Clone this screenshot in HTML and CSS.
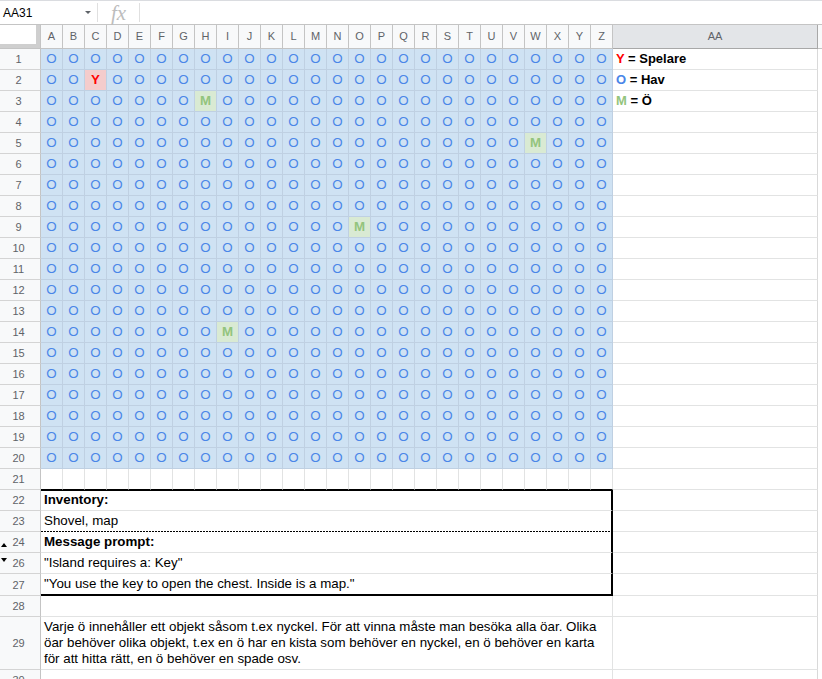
FILE: index.html
```html
<!DOCTYPE html>
<html lang="sv">
<head>
<meta charset="utf-8">
<title>Sheet</title>
<link rel="stylesheet" href="styles.css">
</head>
<body>
<div class="sheet">
  <div class="fbar">
    <div class="namebox"><span class="ref">AA31</span><svg class="caret" width="6" height="3" viewBox="0 0 6 3"><path d="M0 0H6L3 3Z"/></svg></div>
    <div class="sep"></div>
    <div class="fx">fx</div>
    <div class="sep"></div>
    <div class="finput"></div>
  </div>

  <div class="colhead">
    <div class="corner"></div>
    <div class="ch">A</div><div class="ch">B</div><div class="ch">C</div><div class="ch">D</div><div class="ch">E</div><div class="ch">F</div><div class="ch">G</div><div class="ch">H</div><div class="ch">I</div><div class="ch">J</div><div class="ch">K</div><div class="ch">L</div><div class="ch">M</div><div class="ch">N</div><div class="ch">O</div><div class="ch">P</div><div class="ch">Q</div><div class="ch">R</div><div class="ch">S</div><div class="ch">T</div><div class="ch">U</div><div class="ch">V</div><div class="ch">W</div><div class="ch">X</div><div class="ch">Y</div><div class="ch">Z</div>
    <div class="ch sel">AA</div>
    <div class="ch rest"></div>
  </div>

  <div class="row sea"><div class="rh">1</div><span>O</span><span>O</span><span>O</span><span>O</span><span>O</span><span>O</span><span>O</span><span>O</span><span>O</span><span>O</span><span>O</span><span>O</span><span>O</span><span>O</span><span>O</span><span>O</span><span>O</span><span>O</span><span>O</span><span>O</span><span>O</span><span>O</span><span>O</span><span>O</span><span>O</span><span>O</span><div class="aa lg"><span class="red">Y</span> = Spelare</div><div class="rest"></div></div>
  <div class="row sea"><div class="rh">2</div><span>O</span><span>O</span><span class="y">Y</span><span>O</span><span>O</span><span>O</span><span>O</span><span>O</span><span>O</span><span>O</span><span>O</span><span>O</span><span>O</span><span>O</span><span>O</span><span>O</span><span>O</span><span>O</span><span>O</span><span>O</span><span>O</span><span>O</span><span>O</span><span>O</span><span>O</span><span>O</span><div class="aa lg"><span class="blue">O</span> = Hav</div><div class="rest"></div></div>
  <div class="row sea"><div class="rh">3</div><span>O</span><span>O</span><span>O</span><span>O</span><span>O</span><span>O</span><span>O</span><span class="m">M</span><span>O</span><span>O</span><span>O</span><span>O</span><span>O</span><span>O</span><span>O</span><span>O</span><span>O</span><span>O</span><span>O</span><span>O</span><span>O</span><span>O</span><span>O</span><span>O</span><span>O</span><span>O</span><div class="aa lg"><span class="green">M</span> = Ö</div><div class="rest"></div></div>
  <div class="row sea"><div class="rh">4</div><span>O</span><span>O</span><span>O</span><span>O</span><span>O</span><span>O</span><span>O</span><span>O</span><span>O</span><span>O</span><span>O</span><span>O</span><span>O</span><span>O</span><span>O</span><span>O</span><span>O</span><span>O</span><span>O</span><span>O</span><span>O</span><span>O</span><span>O</span><span>O</span><span>O</span><span>O</span><div class="aa"></div><div class="rest"></div></div>
  <div class="row sea"><div class="rh">5</div><span>O</span><span>O</span><span>O</span><span>O</span><span>O</span><span>O</span><span>O</span><span>O</span><span>O</span><span>O</span><span>O</span><span>O</span><span>O</span><span>O</span><span>O</span><span>O</span><span>O</span><span>O</span><span>O</span><span>O</span><span>O</span><span>O</span><span class="m">M</span><span>O</span><span>O</span><span>O</span><div class="aa"></div><div class="rest"></div></div>
  <div class="row sea"><div class="rh">6</div><span>O</span><span>O</span><span>O</span><span>O</span><span>O</span><span>O</span><span>O</span><span>O</span><span>O</span><span>O</span><span>O</span><span>O</span><span>O</span><span>O</span><span>O</span><span>O</span><span>O</span><span>O</span><span>O</span><span>O</span><span>O</span><span>O</span><span>O</span><span>O</span><span>O</span><span>O</span><div class="aa"></div><div class="rest"></div></div>
  <div class="row sea"><div class="rh">7</div><span>O</span><span>O</span><span>O</span><span>O</span><span>O</span><span>O</span><span>O</span><span>O</span><span>O</span><span>O</span><span>O</span><span>O</span><span>O</span><span>O</span><span>O</span><span>O</span><span>O</span><span>O</span><span>O</span><span>O</span><span>O</span><span>O</span><span>O</span><span>O</span><span>O</span><span>O</span><div class="aa"></div><div class="rest"></div></div>
  <div class="row sea"><div class="rh">8</div><span>O</span><span>O</span><span>O</span><span>O</span><span>O</span><span>O</span><span>O</span><span>O</span><span>O</span><span>O</span><span>O</span><span>O</span><span>O</span><span>O</span><span>O</span><span>O</span><span>O</span><span>O</span><span>O</span><span>O</span><span>O</span><span>O</span><span>O</span><span>O</span><span>O</span><span>O</span><div class="aa"></div><div class="rest"></div></div>
  <div class="row sea"><div class="rh">9</div><span>O</span><span>O</span><span>O</span><span>O</span><span>O</span><span>O</span><span>O</span><span>O</span><span>O</span><span>O</span><span>O</span><span>O</span><span>O</span><span>O</span><span class="m">M</span><span>O</span><span>O</span><span>O</span><span>O</span><span>O</span><span>O</span><span>O</span><span>O</span><span>O</span><span>O</span><span>O</span><div class="aa"></div><div class="rest"></div></div>
  <div class="row sea"><div class="rh">10</div><span>O</span><span>O</span><span>O</span><span>O</span><span>O</span><span>O</span><span>O</span><span>O</span><span>O</span><span>O</span><span>O</span><span>O</span><span>O</span><span>O</span><span>O</span><span>O</span><span>O</span><span>O</span><span>O</span><span>O</span><span>O</span><span>O</span><span>O</span><span>O</span><span>O</span><span>O</span><div class="aa"></div><div class="rest"></div></div>
  <div class="row sea"><div class="rh">11</div><span>O</span><span>O</span><span>O</span><span>O</span><span>O</span><span>O</span><span>O</span><span>O</span><span>O</span><span>O</span><span>O</span><span>O</span><span>O</span><span>O</span><span>O</span><span>O</span><span>O</span><span>O</span><span>O</span><span>O</span><span>O</span><span>O</span><span>O</span><span>O</span><span>O</span><span>O</span><div class="aa"></div><div class="rest"></div></div>
  <div class="row sea"><div class="rh">12</div><span>O</span><span>O</span><span>O</span><span>O</span><span>O</span><span>O</span><span>O</span><span>O</span><span>O</span><span>O</span><span>O</span><span>O</span><span>O</span><span>O</span><span>O</span><span>O</span><span>O</span><span>O</span><span>O</span><span>O</span><span>O</span><span>O</span><span>O</span><span>O</span><span>O</span><span>O</span><div class="aa"></div><div class="rest"></div></div>
  <div class="row sea"><div class="rh">13</div><span>O</span><span>O</span><span>O</span><span>O</span><span>O</span><span>O</span><span>O</span><span>O</span><span>O</span><span>O</span><span>O</span><span>O</span><span>O</span><span>O</span><span>O</span><span>O</span><span>O</span><span>O</span><span>O</span><span>O</span><span>O</span><span>O</span><span>O</span><span>O</span><span>O</span><span>O</span><div class="aa"></div><div class="rest"></div></div>
  <div class="row sea"><div class="rh">14</div><span>O</span><span>O</span><span>O</span><span>O</span><span>O</span><span>O</span><span>O</span><span>O</span><span class="m">M</span><span>O</span><span>O</span><span>O</span><span>O</span><span>O</span><span>O</span><span>O</span><span>O</span><span>O</span><span>O</span><span>O</span><span>O</span><span>O</span><span>O</span><span>O</span><span>O</span><span>O</span><div class="aa"></div><div class="rest"></div></div>
  <div class="row sea"><div class="rh">15</div><span>O</span><span>O</span><span>O</span><span>O</span><span>O</span><span>O</span><span>O</span><span>O</span><span>O</span><span>O</span><span>O</span><span>O</span><span>O</span><span>O</span><span>O</span><span>O</span><span>O</span><span>O</span><span>O</span><span>O</span><span>O</span><span>O</span><span>O</span><span>O</span><span>O</span><span>O</span><div class="aa"></div><div class="rest"></div></div>
  <div class="row sea"><div class="rh">16</div><span>O</span><span>O</span><span>O</span><span>O</span><span>O</span><span>O</span><span>O</span><span>O</span><span>O</span><span>O</span><span>O</span><span>O</span><span>O</span><span>O</span><span>O</span><span>O</span><span>O</span><span>O</span><span>O</span><span>O</span><span>O</span><span>O</span><span>O</span><span>O</span><span>O</span><span>O</span><div class="aa"></div><div class="rest"></div></div>
  <div class="row sea"><div class="rh">17</div><span>O</span><span>O</span><span>O</span><span>O</span><span>O</span><span>O</span><span>O</span><span>O</span><span>O</span><span>O</span><span>O</span><span>O</span><span>O</span><span>O</span><span>O</span><span>O</span><span>O</span><span>O</span><span>O</span><span>O</span><span>O</span><span>O</span><span>O</span><span>O</span><span>O</span><span>O</span><div class="aa"></div><div class="rest"></div></div>
  <div class="row sea"><div class="rh">18</div><span>O</span><span>O</span><span>O</span><span>O</span><span>O</span><span>O</span><span>O</span><span>O</span><span>O</span><span>O</span><span>O</span><span>O</span><span>O</span><span>O</span><span>O</span><span>O</span><span>O</span><span>O</span><span>O</span><span>O</span><span>O</span><span>O</span><span>O</span><span>O</span><span>O</span><span>O</span><div class="aa"></div><div class="rest"></div></div>
  <div class="row sea"><div class="rh">19</div><span>O</span><span>O</span><span>O</span><span>O</span><span>O</span><span>O</span><span>O</span><span>O</span><span>O</span><span>O</span><span>O</span><span>O</span><span>O</span><span>O</span><span>O</span><span>O</span><span>O</span><span>O</span><span>O</span><span>O</span><span>O</span><span>O</span><span>O</span><span>O</span><span>O</span><span>O</span><div class="aa"></div><div class="rest"></div></div>
  <div class="row sea"><div class="rh">20</div><span>O</span><span>O</span><span>O</span><span>O</span><span>O</span><span>O</span><span>O</span><span>O</span><span>O</span><span>O</span><span>O</span><span>O</span><span>O</span><span>O</span><span>O</span><span>O</span><span>O</span><span>O</span><span>O</span><span>O</span><span>O</span><span>O</span><span>O</span><span>O</span><span>O</span><span>O</span><div class="aa"></div><div class="rest"></div></div>

  <div class="row blank"><div class="rh">21</div><span></span><span></span><span></span><span></span><span></span><span></span><span></span><span></span><span></span><span></span><span></span><span></span><span></span><span></span><span></span><span></span><span></span><span></span><span></span><span></span><span></span><span></span><span></span><span></span><span></span><span></span><div class="aa"></div><div class="rest"></div></div>

  <div class="row"><div class="rh">22</div><div class="wide box box-top strong">Inventory:</div><div class="aa"></div><div class="rest"></div></div>
  <div class="row"><div class="rh">23</div><div class="wide box dash">Shovel, map</div><div class="aa"></div><div class="rest"></div></div>
  <div class="row"><div class="rh">24<svg class="hid hid-up" width="6" height="4" viewBox="0 0 6 4"><path d="M0 4L3 0L6 4Z"/></svg></div><div class="wide box strong">Message prompt:</div><div class="aa"></div><div class="rest"></div></div>
  <div class="row"><div class="rh">26<svg class="hid hid-down" width="6" height="4" viewBox="0 0 6 4"><path d="M0 0H6L3 4Z"/></svg></div><div class="wide box">"Island requires a: Key"</div><div class="aa"></div><div class="rest"></div></div>
  <div class="row row-end"><div class="rh">27</div><div class="wide box box-bottom">"You use the key to open the chest. Inside is a map."</div><div class="aa"></div><div class="rest"></div></div>
  <div class="row"><div class="rh">28</div><div class="wide"></div><div class="aa"></div><div class="rest"></div></div>
  <div class="row row-text"><div class="rh">29</div><div class="wide para">Varje ö innehåller ett objekt såsom t.ex nyckel. För att vinna måste man besöka alla öar. Olika öar behöver olika objekt, t.ex en ö har en kista som behöver en nyckel, en ö behöver en karta för att hitta rätt, en ö behöver en spade osv.</div><div class="aa"></div><div class="rest"></div></div>
  <div class="row"><div class="rh">30</div><div class="wide"></div><div class="aa"></div><div class="rest"></div></div>
</div>
</body>
</html>
```

FILE: styles.css
```css
* {
  box-sizing: border-box;
  margin: 0;
  padding: 0;
}

html,
body {
  background: #ffffff;
}

body {
  font-family: "Liberation Sans", Arial, sans-serif;
  font-size: 13.33px;
  color: #000000;
  overflow: hidden;
}

.sheet {
  width: 822px;
  height: 679px;
  overflow: hidden;
}

/* formula bar */
.fbar {
  display: flex;
  align-items: center;
  height: 25px;
  border-top: 1px solid #dadce0;
  border-bottom: 1px solid #c4c4c4;
}

.namebox {
  width: 97px;
  height: 100%;
  display: flex;
  align-items: center;
  justify-content: space-between;
  padding: 0 6px 0 3px;
  font-size: 12px;
  color: #000;
}

.caret {
  fill: #5f6368;
}

.sep {
  width: 1px;
  height: 19px;
  background: #e0e0e0;
}

.fx {
  width: 41px;
  text-align: center;
  font-family: "Liberation Serif", serif;
  font-style: italic;
  font-size: 21px;
  line-height: 22px;
  color: #bdbdbd;
}

.finput {
  flex: 1;
}

/* column headers */
.colhead {
  display: flex;
  height: 24px;
}

.corner {
  width: 41px;
  flex: none;
  background: #ffffff;
  border-right: 1px solid #c4c4c4;
  border-bottom: 1px solid #c4c4c4;
  box-shadow: inset -4px -4px 0 #cfcfcf;
}

.ch {
  width: 22px;
  flex: none;
  background: #f8f9fa;
  border-right: 1px solid #c4c4c4;
  border-bottom: 1px solid #c4c4c4;
  color: #5f6368;
  font-size: 11px;
  line-height: 23px;
  text-align: center;
}

.ch.sel {
  width: 205px;
  background: #e3e5e8;
  border-right-color: #a8a8a8;
  border-bottom-color: #a8a8a8;
}

.ch.rest {
  flex: 1;
  width: auto;
  border-right: none;
}

/* rows */
.row {
  display: flex;
  height: 21px;
}

.rh {
  position: relative;
  width: 41px;
  flex: none;
  display: flex;
  align-items: center;
  justify-content: center;
  padding-right: 3px;
  background: #f8f9fa;
  border-right: 1px solid #c4c4c4;
  border-bottom: 1px solid #d4d4d4;
  color: #5f6368;
  font-size: 11px;
}

.hid {
  position: absolute;
  left: 1px;
  fill: #000;
}

.hid-up {
  top: 11px;
}

.hid-down {
  top: 5px;
}

.sea > span {
  width: 22px;
  flex: none;
  background: #cfe2f3;
  border-right: 1px solid #bfd0e2;
  border-bottom: 1px solid #bfd0e2;
  color: #4a86e8;
  text-align: center;
  line-height: 20px;
}

.sea > span.y {
  background: #f4cccc;
  color: #ff0000;
  font-weight: bold;
}

.sea > span.m {
  background: #d9ead3;
  color: #93c47d;
  font-weight: bold;
}

.blank > span {
  width: 22px;
  flex: none;
  border-right: 1px solid #e2e3e3;
  border-bottom: 1px solid #000000;
}

.aa {
  width: 205px;
  flex: none;
  padding-left: 3px;
  border-right: 1px solid #d9d9d9;
  border-bottom: 1px solid #e2e3e3;
  line-height: 20px;
  white-space: nowrap;
}

.aa.lg {
  font-weight: bold;
  font-size: 13px;
}

.red {
  color: #ff0000;
}

.blue {
  color: #4a86e8;
}

.green {
  color: #93c47d;
}

.rest {
  flex: 1;
}

.wide {
  width: 572px;
  flex: none;
  padding-left: 3px;
  border-right: 1px solid #e2e3e3;
  border-bottom: 1px solid #e2e3e3;
  line-height: 20px;
  white-space: nowrap;
}

.strong {
  font-weight: bold;
}

.box {
  border-right: 2px solid #000000;
}

.box-top {
  box-shadow: inset 0 1px 0 #000000;
}

.dash {
  border-bottom: none;
  background: repeating-linear-gradient(90deg, #000 0 2px, transparent 2px 3px) left bottom / 100% 1px no-repeat;
}

.row-end {
  height: 22px;
}

.box-bottom {
  border-bottom: 2px solid #000000;
}

.row-text {
  height: 53px;
}

.para {
  display: flex;
  align-items: flex-end;
  white-space: normal;
  line-height: 16px;
  padding: 0 6px 2px 3px;
}
```
